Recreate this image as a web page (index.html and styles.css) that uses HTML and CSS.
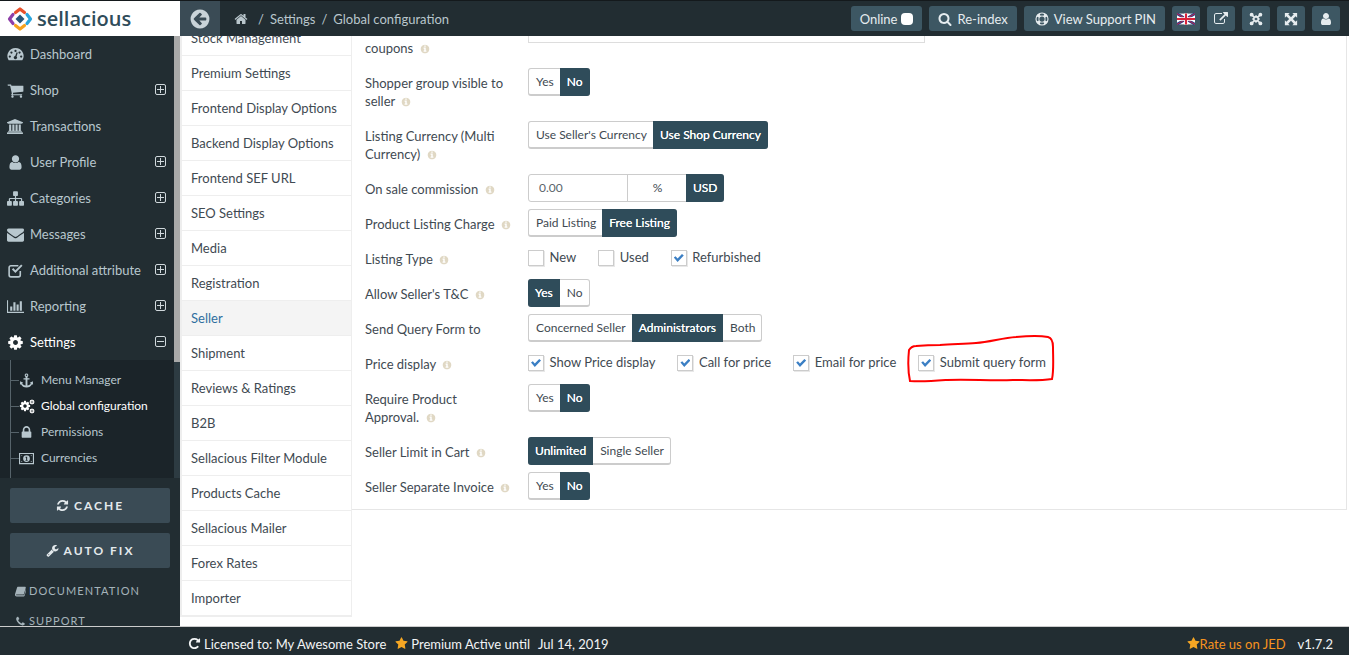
FILE: index.html
```html
<!DOCTYPE html>
<html lang="en">
  <head>
    <meta charset="UTF-8" />
    <meta name="viewport" content="width=device-width, initial-scale=1.0" />
    <title>Global configuration</title>
    <link rel="stylesheet" href="styles.css">
  </head>

  <body>
    <svg class="defs" xmlns="http://www.w3.org/2000/svg">
      <symbol id="i-star" viewBox="0 0 1792 1792"><path d="M1728 647q0 22-26 48l-363 354 86 500q1 7 1 20 0 21-10.5 35.5t-30.5 14.5q-19 0-40-12l-449-236-449 236q-22 12-40 12-21 0-31.5-14.5t-10.5-35.5q0-6 2-20l86-500-364-354q-25-27-25-48 0-37 56-46l502-73 225-455q19-41 49-41t49 41l225 455 502 73q56 9 56 46z"/></symbol>
      <symbol id="i-user" viewBox="0 0 1792 1792"><path d="M1536 1399q0 109-62.5 187t-150.5 78h-854q-88 0-150.5-78t-62.5-187q0-85 8.5-160.5t31.5-152 58.5-131 94-89 134.5-34.5q131 128 313 128t313-128q76 0 134.5 34.5t94 89 58.5 131 31.5 152 8.5 160.5zm-256-887q0 159-112.5 271.5t-271.5 112.5-271.5-112.5-112.5-271.5 112.5-271.5 271.5-112.5 271.5 112.5 112.5 271.5z"/></symbol>
      <symbol id="i-search" viewBox="0 0 1792 1792"><path d="M1216 832q0-185-131.5-316.5t-316.5-131.5-316.5 131.5-131.5 316.5 131.5 316.5 316.5 131.5 316.5-131.5 131.5-316.5zm512 832q0 52-38 90t-90 38q-54 0-90-38l-343-342q-179 124-399 124-143 0-273.5-55.5t-225-150-150-225-55.5-273.5 55.5-273.5 150-225 225-150 273.5-55.5 273.5 55.5 225 150 150 225 55.5 273.5q0 220-124 399l343 343q37 37 37 90z"/></symbol>
      <symbol id="i-cart" viewBox="0 0 1792 1792"><path d="M704 1536q0 52-38 90t-90 38-90-38-38-90 38-90 90-38 90 38 38 90zm896 0q0 52-38 90t-90 38-90-38-38-90 38-90 90-38 90 38 38 90zm128-1088v512q0 24-16.5 42.5t-40.5 21.5l-1044 122q13 60 13 70 0 16-24 64h920q26 0 45 19t19 45-19 45-45 19h-1024q-26 0-45-19t-19-45q0-11 8-31.5t16-36 21.5-40 15.5-29.5l-177-823h-204q-26 0-45-19t-19-45 19-45 45-19h256q16 0 28.5 6.5t19.5 15.5 13 24.5 8 26 5.5 29.5 4.5 26h1201q26 0 45 19t19 45z"/></symbol>
      <symbol id="i-envelope" viewBox="0 0 1792 1792"><path d="M1792 710v794q0 66-47 113t-113 47h-1472q-66 0-113-47t-47-113v-794q44 49 101 87 362 246 497 345 57 42 92.5 65.5t94.5 48 110 24.5h2q51 0 110-24.5t94.5-48 92.5-65.5q170-123 498-345 57-39 100-87zm0-294q0 79-49 151t-122 123q-376 261-468 325-10 7-42.5 30.5t-54 38-52 32.5-57.5 27-50 9h-2q-23 0-50-9t-57.5-27-52-32.5-54-38-42.5-30.5q-91-64-262-182.5t-205-142.5q-62-42-117-115.5t-55-136.5q0-78 41.5-130t118.5-52h1472q65 0 112.5 47t47.5 113z"/></symbol>
      <symbol id="i-cog" viewBox="0 0 1792 1792"><path d="M1152 896q0-106-75-181t-181-75-181 75-75 181 75 181 181 75 181-75 75-181zm512-109v222q0 12-8 23t-20 13l-185 28q-19 54-39 91 35 50 107 138 10 12 10 25t-9 23q-27 37-99 108t-94 71q-12 0-26-9l-138-108q-44 23-91 38-16 136-29 186-7 28-36 28h-222q-14 0-24.5-8.5t-11.5-21.5l-28-184q-49-16-90-37l-141 107q-10 9-25 9-14 0-25-11-126-114-165-168-7-10-7-23 0-12 8-23 15-21 51-66.5t54-70.5q-27-50-41-99l-183-27q-13-2-21-12.5t-8-23.5v-222q0-12 8-23t19-13l186-28q14-46 39-92-40-57-107-138-10-12-10-24 0-10 9-23 26-36 98.5-107.5t94.5-71.5q13 0 26 10l138 107q44-23 91-38 16-136 29-186 7-28 36-28h222q14 0 24.5 8.5t11.5 21.5l28 184q49 16 90 37l142-107q9-9 24-9 13 0 25 10 129 119 165 170 7 8 7 22 0 12-8 23-15 21-51 66.5t-54 70.5q26 50 41 98l183 28q13 2 21 12.5t8 23.5z"/></symbol>
      <symbol id="i-lock" viewBox="0 0 1792 1792"><path d="M640 768h512v-192q0-106-75-181t-181-75-181 75-75 181v192zm832 96v576q0 40-28 68t-68 28h-960q-40 0-68-28t-28-68v-576q0-40 28-68t68-28h32v-192q0-184 132-316t316-132 316 132 132 316v192h32q40 0 68 28t28 68z"/></symbol>
      <symbol id="i-info" viewBox="0 0 1792 1792"><path d="M1152 1376v-160q0-14-9-23t-23-9h-96v-512q0-14-9-23t-23-9h-320q-14 0-23 9t-9 23v160q0 14 9 23t23 9h96v320h-96q-14 0-23 9t-9 23v160q0 14 9 23t23 9h448q14 0 23-9t9-23zm-128-896v-160q0-14-9-23t-23-9h-192q-14 0-23 9t-9 23v160q0 14 9 23t23 9h192q14 0 23-9t9-23zm640 416q0 209-103 385.5t-279.5 279.5-385.5 103-385.5-103-279.5-279.5-103-385.5 103-385.5 279.5-279.5 385.5-103 385.5 103 279.5 279.5 103 385.5z"/></symbol>
      <symbol id="i-home" viewBox="0 0 1792 1792"><path d="M1472 992v480q0 26-19 45t-45 19h-384v-384h-256v384h-384q-26 0-45-19t-19-45v-480q0-1 .5-3t.5-3l575-474 575 474q1 2 1 6zm223-69l-62 74q-8 9-21 11h-3q-13 0-21-7l-692-577-692 577q-12 8-24 7-13-2-21-11l-62-74q-8-10-7-23.5t11-21.5l719-599q32-26 76-26t76 26l244 204v-195q0-14 9-23t23-9h192q14 0 23 9t9 23v408l219 182q10 8 11 21.5t-7 23.5z"/></symbol>
      <symbol id="i-back" viewBox="0 0 1792 1792"><path d="M1408 960v-128q0-26-19-45t-45-19h-502l189-189q19-19 19-45t-19-45l-91-91q-18-18-45-18t-45 18l-362 362-91 91q-18 18-18 45t18 45l91 91 362 362q18 18 45 18t45-18l91-91q18-18 18-45t-18-45l-189-189h502q26 0 45-19t19-45zm256-64q0 209-103 385.5t-279.5 279.5-385.5 103-385.5-103-279.5-279.5-103-385.5 103-385.5 279.5-279.5 385.5-103 385.5 103 279.5 279.5 103 385.5z"/></symbol>
      <symbol id="i-chart" viewBox="0 0 2048 1792"><path d="M640 896v512h-256v-512h256zm384-512v1024h-256v-1024h256zm1024 1152v128h-2048v-1536h128v1408h1920zm-640-896v768h-256v-768h256zm384-384v1152h-256v-1152h256z"/></symbol>
      <symbol id="i-refresh" viewBox="0 0 1792 1792"><path d="M1639 1056q0 5-1 7-64 268-268 434.5t-478 166.5q-146 0-282.5-55t-243.5-157l-129 129q-19 19-45 19t-45-19-19-45v-448q0-26 19-45t45-19h448q26 0 45 19t19 45-19 45l-137 137q71 66 161 102t187 36q134 0 250-65t186-179q11-17 53-117 8-23 30-23h192q13 0 22.5 9.5t9.5 22.5zm25-800v448q0 26-19 45t-45 19h-448q-26 0-45-19t-19-45 19-45l138-138q-148-137-349-137-134 0-250 65t-186 179q-11 17-53 117-8 23-30 23h-199q-13 0-22.5-9.5t-9.5-22.5v-7q65-268 270-434.5t480-166.5q146 0 284 55.5t245 156.5l130-129q19-19 45-19t45 19 19 45z"/></symbol>
      <symbol id="i-external" viewBox="0 0 1792 1792"><path d="M1408 928v320q0 119-84.5 203.5t-203.5 84.5h-832q-119 0-203.5-84.5t-84.5-203.5v-832q0-119 84.5-203.5t203.5-84.5h704q14 0 23 9t9 23v64q0 14-9 23t-23 9h-704q-66 0-113 47t-47 113v832q0 66 47 113t113 47h832q66 0 113-47t47-113v-320q0-14 9-23t23-9h64q14 0 23 9t9 23zm384-864v512q0 26-19 45t-45 19-45-19l-176-176-652 652q-10 10-23 10t-23-10l-114-114q-10-10-10-23t10-23l652-652-176-176q-19-19-19-45t19-45 45-19h512q26 0 45 19t19 45z"/></symbol>
      <symbol id="i-phone" viewBox="0 0 1792 1792"><path d="M1600 1240q0 27-10 70.5t-21 68.5q-21 50-122 106-94 51-186 51-27 0-53-3.5t-57.5-12.5-47-14.5-55.5-20.5-49-18q-98-35-175-83-127-79-264-216t-216-264q-48-77-83-175-3-9-18-49t-20.5-55.5-14.5-47-12.5-57.5-3.5-53q0-92 51-186 56-101 106-122 25-11 68.5-21t70.5-10q14 0 21 3 18 6 53 76 11 19 30 54t35 63.5 31 53.5q3 4 17.5 25t21.5 35.5 7 28.5q0 20-28.5 50t-62 55-62 53-28.5 46q0 9 5 22.5t8.5 20.5 14 24 11.5 19q76 137 174 235t235 174q2 1 19 11.5t24 14 20.5 8.5 22.5 5q18 0 46-28.5t53-62 55-62 50-28.5q14 0 28.5 7t35.5 21.5 25 17.5q25 15 53.5 31t63.5 35 54 30q70 35 76 53 3 7 3 21z"/></symbol>
      <symbol id="i-wrench" viewBox="0 0 1792 1792"><path d="M448 1472q0-26-19-45t-45-19-45 19-19 45 19 45 45 19 45-19 19-45zm644-420l-682 682q-37 37-90 37-52 0-91-37l-106-108q-38-36-38-90 0-53 38-91l681-681q39 98 114.5 173.5t173.5 114.5zm634-435q0 39-23 106-47 134-164.5 217.5t-258.5 83.5q-185 0-316.5-131.5t-131.5-316.5 131.5-316.5 316.5-131.5q58 0 121.5 16.5t107.5 46.5q16 11 16 28t-16 28l-293 169v224l193 107q5-3 79-48.5t135.5-81 70.5-35.5q15 0 23.5 10t8.5 25z"/></symbol>
      <symbol id="i-rotate" viewBox="0 0 1792 1792"><path d="M1664 256v448q0 26-19 45t-45 19h-448q-42 0-59-40-17-39 14-69l138-138q-148-137-349-137-104 0-198.5 40.5t-163.5 109.5-109.5 163.5-40.5 198.5 40.5 198.5 109.5 163.5 163.5 109.5 198.5 40.5q119 0 225-52t179-147q7-10 23-12 15 0 25 9l137 138q9 8 9.5 20.5t-7.5 22.5q-109 132-264 204.5t-327 72.5q-156 0-298-61t-245-164-164-245-61-298 61-298 164-245 245-164 298-61q147 0 284.5 55.5t244.5 156.5l130-129q29-31 70-14 39 17 39 59z"/></symbol>
      <symbol id="i-bank" viewBox="0 0 2048 1792"><path d="M960 0l960 384v128h-128q0 26-20.5 45t-48.5 19h-1526q-28 0-48.5-19t-20.5-45h-128v-128zm-704 640h256v768h128v-768h256v768h128v-768h256v768h128v-768h256v768h59q28 0 48.5 19t20.5 45v64h-1664v-64q0-26 20.5-45t48.5-19h59v-768zm1595 960q28 0 48.5 19t20.5 45v128h-1920v-128q0-26 20.5-45t48.5-19h1782z"/></symbol>
      <symbol id="i-sitemap" viewBox="0 0 1792 1792"><path d="M1792 1248v320q0 40-28 68t-68 28h-320q-40 0-68-28t-28-68v-320q0-40 28-68t68-28h96v-192h-512v192h96q40 0 68 28t28 68v320q0 40-28 68t-68 28h-320q-40 0-68-28t-28-68v-320q0-40 28-68t68-28h96v-192h-512v192h96q40 0 68 28t28 68v320q0 40-28 68t-68 28h-320q-40 0-68-28t-28-68v-320q0-40 28-68t68-28h96v-192q0-52 38-90t90-38h512v-192h-96q-40 0-68-28t-28-68v-320q0-40 28-68t68-28h320q40 0 68 28t28 68v320q0 40-28 68t-68 28h-96v192h512q52 0 90 38t38 90v192h96q40 0 68 28t28 68z"/></symbol>
      <symbol id="i-expand" viewBox="0 0 16 16"><path d="M1 1h5.500L4.800 2.700 8 5.900l3.200-3.200L9.500 1H15v5.500l-1.700-1.700L10.100 8l3.200 3.200 1.700-1.700V15H9.500l1.700-1.700L8 10.100l-3.200 3.200L6.500 15H1V9.500l1.700 1.700L5.900 8 2.700 4.800 1 6.500z"/></symbol>
      <symbol id="i-joomla" viewBox="0 0 16 16">
        <circle cx="3" cy="3" r="2.200"/><circle cx="13" cy="3" r="2.200"/><circle cx="3" cy="13" r="2.200"/><circle cx="13" cy="13" r="2.200"/>
        <path fill="none" stroke="currentColor" stroke-width="2" d="M8 4.800L11.200 8 8 11.200 4.800 8zM3 3l3 3M13 3l-3 3M3 13l3-3M13 13l-3-3"/>
      </symbol>
      <symbol id="i-gauge" viewBox="0 0 18 16"><path fill-rule="evenodd" d="M9 1a8.500 8.500 0 0 1 7.400 12.800.8.800 0 0 1-.7.400H2.300a.8.800 0 0 1-.7-.4A8.500 8.500 0 0 1 9 1zM9 3a1.200 1.200 0 1 0 0 2.400A1.200 1.200 0 0 0 9 3zM4.700 4.800a1.200 1.200 0 1 0 0 2.400 1.200 1.200 0 0 0 0-2.400zM13.300 4.800a1.200 1.200 0 1 0 0 2.400 1.200 1.200 0 0 0 0-2.400zM3 9a1.200 1.200 0 1 0 0 2.400A1.200 1.200 0 0 0 3 9zM15 9a1.200 1.200 0 1 0 0 2.400A1.200 1.200 0 0 0 15 9zM10.200 5.700L8.700 9.500a1.700 1.700 0 1 0 1.400.5l1.300-3.900z"/></symbol>
      <symbol id="i-check" viewBox="0 0 16 16"><path fill="none" stroke="currentColor" stroke-width="1.500" d="M12.500 8.500v3.800a1.700 1.700 0 0 1-1.700 1.700H3.700A1.700 1.700 0 0 1 2 12.300V5.200a1.700 1.700 0 0 1 1.700-1.700h7"/><path d="M4.600 7l1.300-1.300 2 2L13.300 2.300l1.300 1.300L7.900 10.300z"/></symbol>
      <symbol id="i-anchor" viewBox="0 0 16 16"><path d="M8 .5a2 2 0 0 1 1 3.700v1.300h2.200v1.500H9v6.300c1.700-.2 3-1 3.600-2l-1.100-.8 3.300-1.700.2 3.800-1.100-.7C12.900 13.900 10.700 15.500 8 15.500s-4.900-1.600-5.900-3.600l-1.100.7.200-3.800 3.300 1.700-1.100.8c.6 1 1.900 1.800 3.600 2V7H4.800V5.500H7V4.200A2 2 0 0 1 8 .5zM8 1.700a.8.8 0 1 0 0 1.600.8.8 0 0 0 0-1.600z" fill-rule="evenodd"/></symbol>
      <symbol id="i-money" viewBox="0 0 16 12"><path fill-rule="evenodd" d="M0 0h16v12H0zM1.200 1.200v9.600h13.600V1.200zM8 2.400a3.600 3.600 0 1 1 0 7.200 3.600 3.600 0 0 1 0-7.200zM7 4.200v1h.6v2.400H7v.9h2.200v-.9h-.5V4.200zM2.500 2.400h1.300L2.500 3.700zM13.500 9.600h-1.300l1.300-1.300zM2.500 9.600V8.300l1.300 1.300zM13.500 2.400v1.300l-1.300-1.300z"/></symbol>
      <symbol id="i-book" viewBox="0 0 16 14"><path d="M4 0h11l.8 1-2.800 9.500c-.2.700-.7 1-1.400 1H2.500c-.6 0-.9.200-.9.500 0 .4.300.6.900.6h10.200c.3 0 .6-.2.700-.5l3-10 .5.500v.7l-2.900 9.800c-.2.600-.8 1-1.400 1H2.400C1 14 0 13 0 11.700c0-.4 0-.7.100-1L3 1c.2-.6.500-1 1-1z"/></symbol>
      <symbol id="i-ring" viewBox="0 0 16 16"><path fill-rule="evenodd" d="M8 .5a7.500 7.500 0 1 1 0 15 7.500 7.500 0 0 1 0-15zM8 5a3 3 0 1 0 0 6 3 3 0 0 0 0-6zM5.500 2.300L6.300 4.300a4 4 0 0 1 3.400 0l.8-2a6.200 6.200 0 0 0-5 0zM5.500 13.700a6.200 6.200 0 0 0 5 0l-.8-2a4 4 0 0 1-3.400 0zM2.300 5.500a6.200 6.200 0 0 0 0 5l2-.8a4 4 0 0 1 0-3.400zM13.700 5.500l-2 .8a4 4 0 0 1 0 3.400l2 .8a6.200 6.200 0 0 0 0-5z"/></symbol>
    </svg>

    <div class="app">
      <header class="topbar">
        <div class="logo">
          <svg class="logo-mark" viewBox="0 0 26 26">
            <g fill="none" stroke-width="3.200" stroke-linecap="round" stroke-linejoin="round">
              <path d="M8.500 6.500L13 3l4.500 3.500" stroke="#e8512c"/>
              <path d="M6 8.500L2.500 13 6 17.500" stroke="#8e3fa8"/>
              <path d="M20 8.500l3.500 4.500-3.500 4.500" stroke="#2ba6de"/>
              <path d="M8.500 19.500L13 23l4.500-3.500" stroke="#f6a21e"/>
            </g>
            <path d="M13 8.500l4.500 4.500-4.500 4.500L8.500 13z" fill="#27567a"/>
          </svg>
          <span class="logo-text">sellacious</span>
        </div>
        <a class="back"><svg class="ico"><use href="#i-back"/></svg></a>
        <div class="crumbs">
          <svg class="ico home"><use href="#i-home"/></svg>
          <span>/</span><span>Settings</span><span>/</span><span>Global configuration</span>
        </div>
        <div class="tools">
          <a class="tool">Online <i class="dot"></i></a>
          <a class="tool"><svg class="ico"><use href="#i-search"/></svg>Re-index</a>
          <a class="tool pin"><svg class="ico"><use href="#i-ring"/></svg>View Support PIN</a>
          <a class="tool square">
            <svg class="flag" viewBox="0 0 60 36">
              <rect width="60" height="36" fill="#fff"/>
              <path d="M0 0l60 36M60 0L0 36" stroke="#2b3f8c" stroke-width="9"/>
              <path d="M0 0l60 36M60 0L0 36" stroke="#d8243a" stroke-width="3"/>
              <path d="M30 0v36M0 18h60" stroke="#fff" stroke-width="12"/>
              <path d="M30 0v36M0 18h60" stroke="#d8243a" stroke-width="7"/>
            </svg>
          </a>
          <a class="tool square"><svg class="ico"><use href="#i-external"/></svg></a>
          <a class="tool square"><svg class="ico"><use href="#i-joomla"/></svg></a>
          <a class="tool square"><svg class="ico"><use href="#i-expand"/></svg></a>
          <a class="tool square"><svg class="ico"><use href="#i-user"/></svg></a>
        </div>
      </header>

      <div class="middle">
        <aside class="side">
          <div class="side-top">
            <nav class="nav">
              <a class="nav-item"><svg class="ico"><use href="#i-gauge"/></svg>Dashboard</a>
              <a class="nav-item"><svg class="ico"><use href="#i-cart"/></svg>Shop<b class="sq plus"></b></a>
              <a class="nav-item"><svg class="ico"><use href="#i-bank"/></svg>Transactions</a>
              <a class="nav-item"><svg class="ico"><use href="#i-user"/></svg>User Profile<b class="sq plus"></b></a>
              <a class="nav-item"><svg class="ico"><use href="#i-sitemap"/></svg>Categories<b class="sq plus"></b></a>
              <a class="nav-item"><svg class="ico"><use href="#i-envelope"/></svg>Messages<b class="sq plus"></b></a>
              <a class="nav-item"><svg class="ico"><use href="#i-check"/></svg>Additional attribute<b class="sq plus"></b></a>
              <a class="nav-item"><svg class="ico"><use href="#i-chart"/></svg>Reporting<b class="sq plus"></b></a>
              <a class="nav-item open"><svg class="ico"><use href="#i-cog"/></svg>Settings<b class="sq"></b></a>
              <div class="sub">
                <a class="sub-item"><svg class="ico"><use href="#i-anchor"/></svg>Menu Manager</a>
                <a class="sub-item on">
                  <span class="cogs">
                    <svg class="ico big"><use href="#i-cog"/></svg>
                    <svg class="ico small"><use href="#i-cog"/></svg>
                    <svg class="ico small low"><use href="#i-cog"/></svg>
                  </span>Global configuration
                </a>
                <a class="sub-item"><svg class="ico"><use href="#i-lock"/></svg>Permissions</a>
                <a class="sub-item"><svg class="ico"><use href="#i-money"/></svg>Currencies</a>
              </div>
            </nav>
            <div class="scroll"><div class="thumb"></div></div>
          </div>
          <a class="side-btn"><svg class="ico"><use href="#i-refresh"/></svg>CACHE</a>
          <a class="side-btn"><svg class="ico"><use href="#i-wrench"/></svg>AUTO FIX</a>
          <a class="side-link first"><svg class="ico"><use href="#i-book"/></svg>DOCUMENTATION</a>
          <a class="side-link"><svg class="ico"><use href="#i-phone"/></svg>SUPPORT</a>
        </aside>

        <div class="tabs">
          <a class="tab">Stock Management</a>
          <a class="tab">Premium Settings</a>
          <a class="tab">Frontend Display Options</a>
          <a class="tab">Backend Display Options</a>
          <a class="tab">Frontend SEF URL</a>
          <a class="tab">SEO Settings</a>
          <a class="tab">Media</a>
          <a class="tab">Registration</a>
          <a class="tab active">Seller</a>
          <a class="tab">Shipment</a>
          <a class="tab">Reviews &amp; Ratings</a>
          <a class="tab">B2B</a>
          <a class="tab">Sellacious Filter Module</a>
          <a class="tab">Products Cache</a>
          <a class="tab">Sellacious Mailer</a>
          <a class="tab">Forex Rates</a>
          <a class="tab">Importer</a>
        </div>

        <main class="main">
          <div class="panel">
            <div class="row first">
              <label class="lbl">coupons <svg class="ico tip"><use href="#i-info"/></svg></label>
              <div class="wide-input"></div>
            </div>
            <div class="row">
              <label class="lbl">Shopper group visible to seller <svg class="ico tip"><use href="#i-info"/></svg></label>
              <div class="toggle"><span>Yes</span><span class="sel">No</span></div>
            </div>
            <div class="row">
              <label class="lbl">Listing Currency (Multi Currency) <svg class="ico tip"><use href="#i-info"/></svg></label>
              <div class="toggle"><span>Use Seller's Currency</span><span class="sel">Use Shop Currency</span></div>
            </div>
            <div class="row">
              <label class="lbl">On sale commission <svg class="ico tip"><use href="#i-info"/></svg></label>
              <div class="combo"><span class="amount">0.00</span><span class="pct">%</span><span class="sel">USD</span></div>
            </div>
            <div class="row">
              <label class="lbl">Product Listing Charge <svg class="ico tip"><use href="#i-info"/></svg></label>
              <div class="toggle"><span>Paid Listing</span><span class="sel">Free Listing</span></div>
            </div>
            <div class="row">
              <label class="lbl">Listing Type <svg class="ico tip"><use href="#i-info"/></svg></label>
              <div class="checks">
                <span class="chk"><i class="box"></i>New</span>
                <span class="chk"><i class="box"></i>Used</span>
                <span class="chk"><i class="box on"></i>Refurbished</span>
              </div>
            </div>
            <div class="row">
              <label class="lbl">Allow Seller's T&amp;C <svg class="ico tip"><use href="#i-info"/></svg></label>
              <div class="toggle"><span class="sel">Yes</span><span>No</span></div>
            </div>
            <div class="row">
              <label class="lbl">Send Query Form to</label>
              <div class="toggle"><span>Concerned Seller</span><span class="sel">Administrators</span><span>Both</span></div>
            </div>
            <div class="row">
              <label class="lbl">Price display <svg class="ico tip"><use href="#i-info"/></svg></label>
              <div class="checks">
                <span class="chk"><i class="box on"></i>Show Price display</span>
                <span class="chk"><i class="box on"></i>Call for price</span>
                <span class="chk"><i class="box on"></i>Email for price</span>
                <span class="chk"><i class="box on"></i>Submit query form</span>
              </div>
            </div>
            <div class="row">
              <label class="lbl">Require Product Approval. <svg class="ico tip"><use href="#i-info"/></svg></label>
              <div class="toggle"><span>Yes</span><span class="sel">No</span></div>
            </div>
            <div class="row">
              <label class="lbl">Seller Limit in Cart <svg class="ico tip"><use href="#i-info"/></svg></label>
              <div class="toggle"><span class="sel">Unlimited</span><span>Single Seller</span></div>
            </div>
            <div class="row">
              <label class="lbl">Seller Separate Invoice <svg class="ico tip"><use href="#i-info"/></svg></label>
              <div class="toggle"><span>Yes</span><span class="sel">No</span></div>
            </div>
          </div>
        </main>
      </div>

      <footer class="foot">
        <svg class="ico"><use href="#i-rotate"/></svg><span class="licensed">Licensed to: My Awesome Store</span>
        <svg class="ico gold"><use href="#i-star"/></svg><span>Premium Active until</span><span class="until">Jul 14, 2019</span>
        <span class="foot-right">
          <svg class="ico gold rate-star"><use href="#i-star"/></svg><span class="rate">Rate us on JED</span><span class="ver">v1.7.2</span>
        </span>
      </footer>
    </div>

    <!-- hand drawn mark round the last checkbox -->
    <svg class="scribble" viewBox="0 0 1349 655">
      <path d="M909 350c-1 10-1 22 1 31 12 1 24 0 37-1 22-1 44 1 66 0 12 0 26 1 39-1 2-8 1-22 1-32 0-4-1-9-5-10-10-2-22-1-32 0-14 1-26 5-40 6-12 1-24 1-36 2-4 0-12 0-24 1-3 0-5 1-7 4z"/>
    </svg>
  </body>
</html>
```

FILE: styles.css
```css
* {
  box-sizing: border-box;
}

html,
body {
  margin: 0;
  height: 100%;
  overflow: hidden;
}

body {
  font-family: Lato, "Liberation Sans", sans-serif;
  font-size: 13px;
  line-height: 18px;
  color: #3f4a52;
  background: #fff;
}

a {
  text-decoration: none;
  color: inherit;
}

.defs {
  display: none;
}

.ico {
  width: 14px;
  height: 14px;
  fill: currentColor;
  flex: none;
}

.app {
  display: flex;
  flex-direction: column;
  height: 100vh;
}

/* top bar */
.topbar {
  display: flex;
  align-items: center;
  flex: none;
  height: 36px;
  border-top: 1px solid #14191c;
  background: #222d32;
}

.logo {
  display: flex;
  align-items: center;
  gap: 4px;
  width: 180px;
  height: 35px;
  padding-left: 7px;
  background: #fff;
}

.logo-mark {
  width: 26px;
  height: 26px;
}

.logo-text {
  font-family: "Open Sans", sans-serif;
  font-size: 20px;
  font-weight: 600;
  line-height: 26px;
  color: #2f4c5a;
}

.back {
  display: flex;
  align-items: center;
  justify-content: center;
  width: 40px;
  height: 35px;
  background: #3a4b55;
  color: #c9d3d8;
}

.back .ico {
  width: 22px;
  height: 22px;
}

.crumbs {
  display: flex;
  align-items: center;
  gap: 6px;
  margin-left: 14px;
  color: #b9c6cc;
}

.crumbs .home {
  margin-right: 4px;
}

.tools {
  display: flex;
  gap: 7px;
  margin-left: auto;
  padding-right: 9px;
}

.tool {
  display: flex;
  align-items: center;
  gap: 5px;
  height: 25px;
  padding: 0 9px;
  border-radius: 3px;
  background: #3d5763;
  color: #e6ecef;
  white-space: nowrap;
}

.tool.pin {
  padding-left: 11px;
}

.tool.square {
  justify-content: center;
  width: 28px;
  padding: 0;
}

.dot {
  width: 12px;
  height: 12px;
  margin-left: -1px;
  border-radius: 4px;
  background: #fff;
}

.flag {
  width: 18px;
  height: 12px;
}

/* body of the page */
.middle {
  display: flex;
  flex: 1;
  min-height: 0;
}

.side {
  display: flex;
  flex-direction: column;
  flex: none;
  width: 180px;
  background: #222d32;
  color: #b8c7ce;
}

.side-top {
  display: flex;
  flex: none;
  height: 442px;
}

.nav {
  width: 174px;
}

.nav-item {
  position: relative;
  display: flex;
  align-items: center;
  gap: 7px;
  height: 36px;
  padding-left: 7px;
}

.nav-item .ico {
  width: 17px;
  height: 17px;
  margin-right: -1px;
}

.nav-item.open {
  color: #fff;
}

/* plus and minus boxes */
.sq {
  position: absolute;
  top: 12px;
  right: 8px;
  width: 11px;
  height: 11px;
  border: 1px solid #d0d8dc;
  border-radius: 2px;
}

.sq::before {
  content: "";
  position: absolute;
  top: 4px;
  left: 1px;
  width: 7px;
  height: 1px;
  background: #d0d8dc;
}

.plus::after {
  content: "";
  position: absolute;
  top: 1px;
  left: 4px;
  width: 1px;
  height: 7px;
  background: #d0d8dc;
}

.sub {
  height: 118px;
  padding-top: 7px;
  font-size: 12px;
  background: #1b2429 linear-gradient(#56636a, #56636a) no-repeat 10px 0 / 1px 100%;
}

.sub-item {
  display: flex;
  align-items: center;
  gap: 7px;
  height: 26px;
  padding-left: 19px;
  background: linear-gradient(#56636a, #56636a) no-repeat 10px 50% / 9px 1px;
}

.sub-item > .ico {
  width: 15px;
  height: 15px;
}

.sub-item.on {
  color: #fff;
}

.cogs {
  position: relative;
  flex: none;
  width: 15px;
  height: 15px;
}

.cogs .big {
  position: absolute;
  left: 0;
  top: 1px;
  width: 12px;
  height: 12px;
}

.cogs .small {
  position: absolute;
  right: -1px;
  top: 0;
  width: 6px;
  height: 6px;
}

.cogs .low {
  top: 9px;
}

.scroll {
  width: 6px;
  background: #2d3b42;
}

.thumb {
  height: 326px;
  background: #a9a9a9;
}

.side-btn {
  display: flex;
  align-items: center;
  justify-content: center;
  flex: none;
  gap: 5px;
  height: 35px;
  margin: 10px 10px 0;
  border-radius: 2px;
  background: #3a4b55;
  color: #e3e9ec;
  font-size: 12px;
  font-weight: 700;
  letter-spacing: 2px;
}

.side-btn .ico {
  width: 13px;
  height: 13px;
}

.side-link {
  display: flex;
  align-items: center;
  flex: none;
  gap: 3px;
  height: 30px;
  padding-left: 15px;
  font-size: 11px;
  letter-spacing: 1.1px;
  color: #a5b3ba;
}

.side-link .ico {
  width: 11px;
  height: 11px;
}

.side-link.first {
  margin-top: 8px;
}

/* setting groups column */
.tabs {
  flex: none;
  width: 172px;
  height: 581px;
  overflow: hidden;
  padding-left: 2px;
  background: #eee;
}

.tab {
  display: flex;
  align-items: center;
  width: 169px;
  height: 35px;
  padding-left: 9px;
  background: #fff;
  border-bottom: 1px solid #eee;
}

.tab:first-child {
  margin-top: -15px;
}

.tab.active {
  background: #f4f4f4;
  color: #2f6f9f;
}

/* form */
.main {
  flex: 1;
  min-width: 0;
  padding-right: 2px;
}

.panel {
  padding: 0 0 2px 13px;
  border-right: 1px solid #e6e6e6;
  border-bottom: 1px solid #e6e6e6;
}

.row {
  display: flex;
  align-items: flex-start;
  margin-bottom: 7px;
}

.lbl {
  flex: none;
  width: 163px;
  min-height: 28px;
  padding: 6px 16px 4px 0;
}

/* this row is scrolled under the top bar */
.row.first .lbl {
  min-height: 0;
  padding-top: 3px;
}

.tip {
  width: 10px;
  height: 10px;
  margin-left: 3px;
  vertical-align: -1px;
  color: #e0d8c4;
}

.wide-input {
  width: 397px;
  height: 7px;
  border: 1px solid #ddd;
  border-top: 0;
}

.toggle,
.combo {
  display: inline-flex;
  height: 28px;
  border: 1px solid #ccc;
  border-bottom-width: 2px;
  border-radius: 3px;
  font-size: 12px;
  color: #3f4a52;
}

.toggle span,
.combo span {
  display: flex;
  align-items: center;
  padding: 0 6px 0 7px;
}

.toggle .sel,
.combo .sel {
  height: 28px;
  margin: -1px 0 -2px;
  padding: 0 7px;
  background: #2f4c5a;
  color: #fff;
  text-shadow: 0 0 0.6px #fff;
}

.toggle .sel:first-child {
  margin-left: -1px;
  border-radius: 3px 0 0 3px;
}

.toggle .sel:last-child,
.combo .sel:last-child {
  margin-right: -1px;
  border-radius: 0 3px 3px 0;
}

.combo {
  border-bottom-width: 1px;
}

.combo .amount {
  width: 99px;
  padding-left: 10px;
  border-right: 1px solid #ccc;
  color: #5a656c;
}

.combo .pct {
  justify-content: center;
  width: 58px;
}

.combo .sel {
  margin-bottom: -1px;
}

.checks {
  display: flex;
  gap: 22px;
  padding-top: 4px;
}

.chk {
  display: flex;
  align-items: center;
  gap: 5.5px;
  height: 18px;
}

.box {
  position: relative;
  width: 16px;
  height: 16px;
  margin-top: 2px;
  border: 1px solid #ccc;
  box-shadow: 1px 1px 0 #e8e8e8;
}

.box.on::after {
  content: "";
  position: absolute;
  top: 3px;
  left: 2px;
  width: 10px;
  height: 8px;
  background: #3b7fc4;
  clip-path: polygon(0 45%, 18% 28%, 38% 55%, 82% 0, 100% 18%, 38% 100%);
}

/* footer */
.foot {
  display: flex;
  align-items: center;
  flex: none;
  height: 29px;
  padding: 5px 16px 0 188px;
  border-top: 1px solid #ccc;
  background: #222d32;
  color: #f2f4f5;
}

.foot .ico {
  width: 13px;
  height: 13px;
  margin-right: 3px;
}

.foot .gold {
  color: #f5a623;
}

.foot .rate-star {
  margin-right: 0;
}

.licensed {
  margin-right: 9px;
}

.until {
  margin-left: 8px;
}

.foot-right {
  display: flex;
  align-items: center;
  margin-left: auto;
}

.rate {
  color: #f7931e;
}

.ver {
  margin-left: 12px;
}

/* red pen mark */
.scribble {
  position: absolute;
  top: 0;
  left: 0;
  width: 1349px;
  height: 655px;
  pointer-events: none;
}

.scribble path {
  fill: none;
  stroke: #f00;
  stroke-width: 2;
}
```
